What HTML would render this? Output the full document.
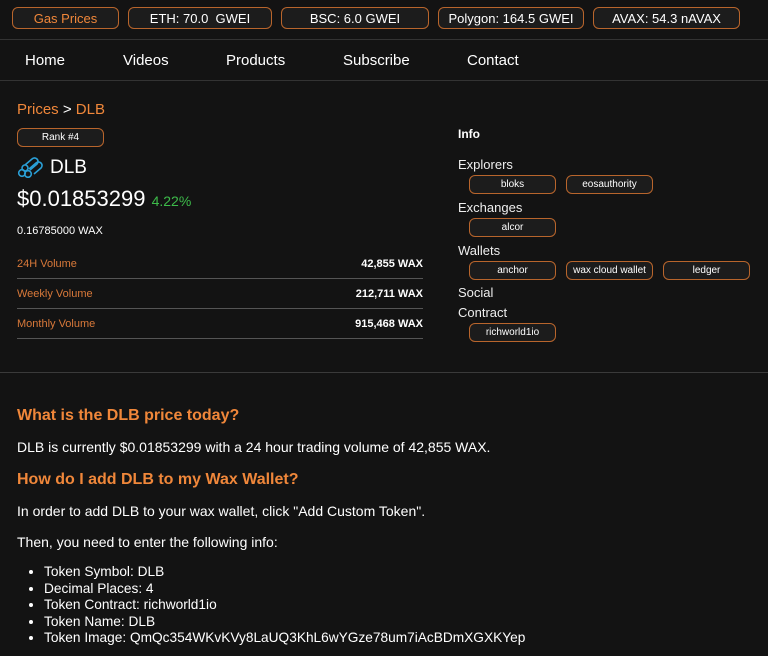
<!DOCTYPE html>
<html><head><style>
*{margin:0;padding:0;box-sizing:border-box}
body{width:768px;height:656px;background:#131313;color:#fff;font-family:"Liberation Sans",Arial,sans-serif;position:relative;overflow:hidden}
.a{position:absolute;white-space:nowrap}
.pill{position:absolute;border:1px solid #b8652c;border-radius:6px;background:#1c1c1c;display:flex;align-items:center;justify-content:center;white-space:nowrap}
.top{top:7px;height:22px;font-size:13px}
.sm{height:19px;font-size:10px;width:87px}
.hl{position:absolute;left:0;width:768px;height:1px;background:#333}
.nav{top:52px;font-size:15px}
.or{color:#f0873a}
.rl{position:absolute;left:17px;width:406px;height:1px;background:#555}
.lab{font-size:11px;color:#d9793a}
.val{font-size:11px;font-weight:bold;right:345px}
.k{font-size:13px;left:458px;color:#eee}
.h{font-size:16px;font-weight:bold;color:#f0873a;left:17px}
.p{font-size:14px;left:17px}
li{font-size:13.7px;line-height:16.5px}
</style></head><body>
<div class="pill top or" style="left:12px;width:107px">Gas Prices</div>
<div class="pill top" style="left:128px;width:144px">ETH: 70.0&nbsp; GWEI</div>
<div class="pill top" style="left:281px;width:148px">BSC: 6.0 GWEI</div>
<div class="pill top" style="left:438px;width:146px">Polygon: 164.5 GWEI</div>
<div class="pill top" style="left:593px;width:147px">AVAX: 54.3 nAVAX</div>
<div class="hl" style="top:39px"></div>
<div class="a nav" style="left:25px">Home</div>
<div class="a nav" style="left:123px">Videos</div>
<div class="a nav" style="left:226px">Products</div>
<div class="a nav" style="left:343px">Subscribe</div>
<div class="a nav" style="left:467px">Contact</div>
<div class="hl" style="top:80px"></div>

<div class="a" style="left:17px;top:101px;font-size:15px"><span class="or">Prices</span> &gt; <span class="or">DLB</span></div>
<div class="pill" style="left:17px;top:128px;width:87px;height:19px;font-size:10px">Rank #4</div>
<svg class="a" style="left:17px;top:156px" width="26" height="22" viewBox="0 0 26 22" fill="none" stroke="#2a9fd6" stroke-width="1.6">
<path d="M8 9 L15 3 A3.5 3.5 0 0 1 20 8 L13 14"/>
<path d="M12 13 L19 7 A3.5 3.5 0 0 1 24 12 L17 18"/>
<circle cx="5" cy="17" r="3.3"/><circle cx="11" cy="18" r="3.3"/><circle cx="8" cy="12" r="3"/>
</svg>
<div class="a" style="left:50px;top:157px;font-size:19px">DLB</div>
<div class="a" style="left:17px;top:186px;font-size:22px">$0.01853299 <span style="color:#3dbb4a;font-size:14px">4.22%</span></div>
<div class="a" style="left:17px;top:225px;font-size:11px">0.16785000 WAX</div>
<div class="a lab" style="left:17px;top:258px">24H Volume</div><div class="a val" style="top:258px">42,855 WAX</div>
<div class="rl" style="top:278px"></div>
<div class="a lab" style="left:17px;top:288px">Weekly Volume</div><div class="a val" style="top:288px">212,711 WAX</div>
<div class="rl" style="top:308px"></div>
<div class="a lab" style="left:17px;top:318px">Monthly Volume</div><div class="a val" style="top:318px">915,468 WAX</div>
<div class="rl" style="top:338px"></div>

<div class="a" style="left:458px;top:127px;font-size:12px;font-weight:bold">Info</div>
<div class="a k" style="top:157px">Explorers</div>
<div class="pill sm" style="left:469px;top:175px">bloks</div>
<div class="pill sm" style="left:566px;top:175px">eosauthority</div>
<div class="a k" style="top:200px">Exchanges</div>
<div class="pill sm" style="left:469px;top:218px">alcor</div>
<div class="a k" style="top:243px">Wallets</div>
<div class="pill sm" style="left:469px;top:261px">anchor</div>
<div class="pill sm" style="left:566px;top:261px">wax cloud wallet</div>
<div class="pill sm" style="left:663px;top:261px">ledger</div>
<div class="a k" style="top:285px">Social</div>
<div class="a k" style="top:305px">Contract</div>
<div class="pill sm" style="left:469px;top:323px">richworld1io</div>

<div class="hl" style="top:372px;background:#3a3a3a"></div>
<div class="a h" style="top:407px">What is the DLB price today?</div>
<div class="a p" style="top:439px">DLB is currently $0.01853299 with a 24 hour trading volume of 42,855 WAX.</div>
<div class="a h" style="top:471px">How do I add DLB to my Wax Wallet?</div>
<div class="a p" style="top:503px">In order to add DLB to your wax wallet, click "Add Custom Token".</div>
<div class="a p" style="top:534px">Then, you need to enter the following info:</div>
<ul class="a" style="left:44px;top:564px">
<li>Token Symbol: DLB</li>
<li>Decimal Places: 4</li>
<li>Token Contract: richworld1io</li>
<li>Token Name: DLB</li>
<li>Token Image: QmQc354WKvKVy8LaUQ3KhL6wYGze78um7iAcBDmXGXKYep</li>
</ul>
</body></html>
